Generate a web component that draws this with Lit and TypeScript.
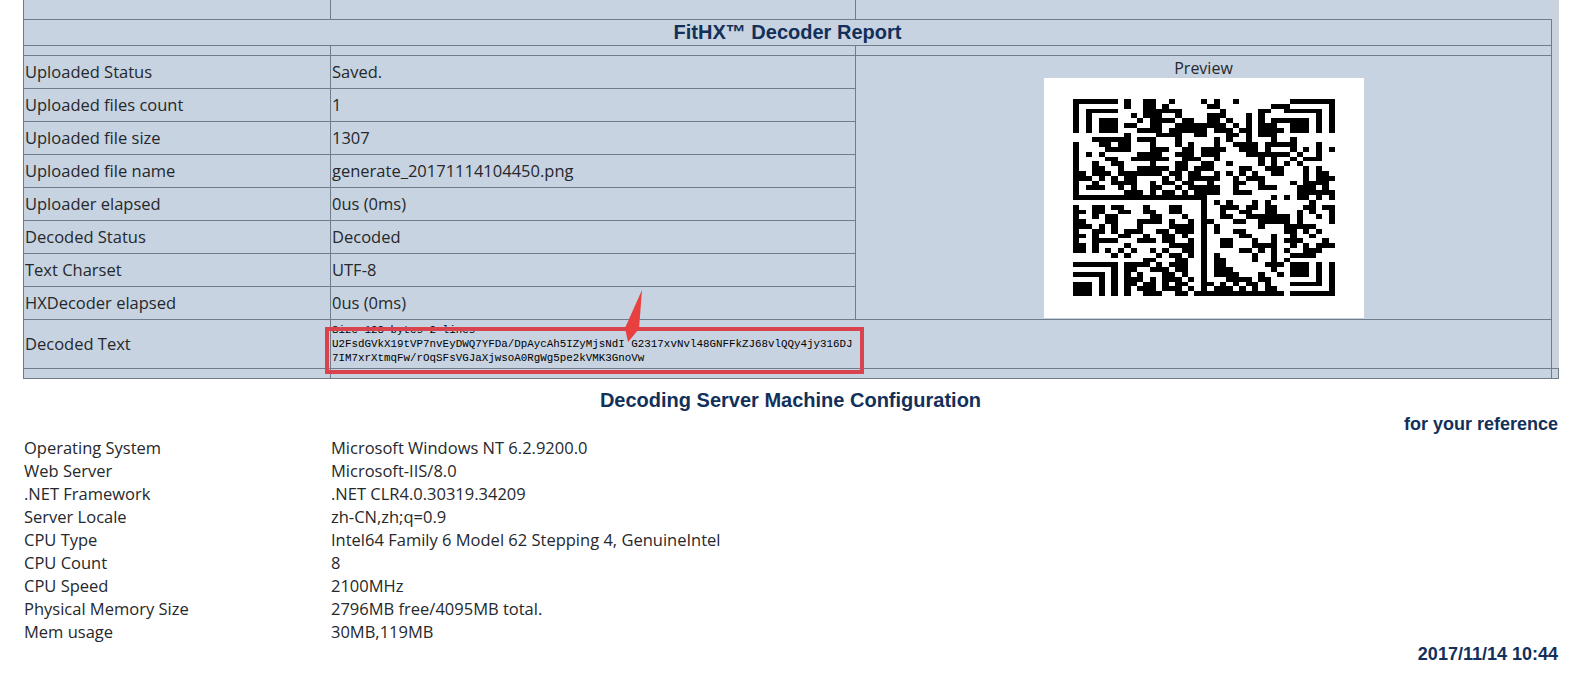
import { LitElement, html, css, svg } from "lit";
import { customElement } from "lit/decorators.js";

const QR: [string, string][] = [
  ["#######.#..##..#....#", ".#..#..............."],
  ["........#..##.#......", "##........###......."],
  ["...........######....", "..#.....##..#.#....."],
  [".........#.###..#....", "###...#.#....#......"],
  ["..........#.####.##..", "##.#..#.#.###......."],
  ["........##..##..#####", "###.#.#.###........."],
  ["..........####.######", ".###.##.####........"],
  ["........#....####..##", "...##.#.###........."],
  ["...######.###...#....", ".#.#..#...#..#......"],
  ["#...##.##...#...#.#..", ".#..####.#####...#.."],
  ["#....####...###..##.#", "###..###.#...#.#.#.#"],
  ["#.#.#.....####..###.#", "##....#######.#..#.."],
  ["#....##..######..###.", ".#......#.#..#.###.."],
  ["#..#..##....#...##..#", "#..#....#.#.#.#....."],
  ["#..##..#..#####.##.##", "#....##..###...#.#.."],
  ["##.###.#######.##.##.", ".#.#.#.#..##...#.##."],
  ["###.#.#.##....#.#.###", "##..#.###......#.###"],
  ["#..#..####..#.##.##..", "#...##..#....#.####."],
  ["#.###..#.#..##..#.###", "##..#...###...###.#."],
  ["#.......###.#.##.#.##", "##..###.......######"],
  ["#####################", "..........#.#.##.#.#"],
  ["....................#", ".#.#...#.#......#..."],
  ["#..##.##...#...##...#", "..###.##.##....##.##"],
  ["##.##..##..##..##...#", "..#..##..##...#.#..#"],
  ["#..#.##.....##...#..#", "..##..#######.#..#.#"],
  ["##...##...####.#..#.#", "#...##..#####.#....#"],
  ["###.#.#...#....####.#", ".#......#...#####..."],
  ["#..##.#.###..##.###.#", ".#..##......##.#.#.."],
  ["##.#...##..#..##.#..#", ".....##...#..#..#..."],
  ["#..####...###.##..#.#", "..##...#..#.###...#."],
  ["##.#....#......####.#", "..##...####..#.#.###"],
  ["##.#.#.#.#..#.#..##.#", ".....##.#.#.#..###.."],
  ["......#.#....#.##.#.#", ".#.....#..#..####..."],
  ["...........##...##..#", ".##....#..#.#......."],
  ["#######.####.#.###..#", ".##......###........"],
  ["......#.##..###.##..#", ".###......#........."],
  ["#####.#.#.#...##.#..#", ".####...#..#........"],
  ["....#.#.###.#.###.#.#", "...####.##.........."],
  ["###.#.#.##.##.#.##..#", "#.#.#.##.#.........."],
  ["###.#.#.#.###.###.#.#", ".###.#.#.##........."],
  ["###.#.#.#..###..##.##", "############........"],
];

function moduleGrid(): boolean[][] {
  const g = QR.map(([l, r]) => (l + r).split("").map((c) => c === "#"));
  const tl = [
    "#######",
    "#......",
    "#.#####",
    "#.#....",
    "#.#.###",
    "#.#.###",
    "#.#.###",
  ];
  for (let y = 0; y < 7; y++) {
    for (let x = 0; x < 7; x++) {
      const on = tl[y][x] === "#";
      g[y][x] = on;
      g[y][40 - x] = on;
      g[34 + y][6 - x] = on;
      g[40 - y][40 - x] = on;
    }
  }
  return g;
}

function qrPath(): string {
  let d = "";
  moduleGrid().forEach((row, y) =>
    row.forEach((on, x) => {
      if (on) d += `M${x} ${y}h1v1h-1z`;
    })
  );
  return d;
}

const STATUS: [string, string][] = [
  ["Uploaded Status", "Saved."],
  ["Uploaded files count", "1"],
  ["Uploaded file size", "1307"],
  ["Uploaded file name", "generate_20171114104450.png"],
  ["Uploader elapsed", "0us (0ms)"],
  ["Decoded Status", "Decoded"],
  ["Text Charset", "UTF-8"],
  ["HXDecoder elapsed", "0us (0ms)"],
];

const SERVER: [string, string][] = [
  ["Operating System", "Microsoft Windows NT 6.2.9200.0"],
  ["Web Server", "Microsoft-IIS/8.0"],
  [".NET Framework", ".NET CLR4.0.30319.34209"],
  ["Server Locale", "zh-CN,zh;q=0.9"],
  ["CPU Type", "Intel64 Family 6 Model 62 Stepping 4, GenuineIntel"],
  ["CPU Count", "8"],
  ["CPU Speed", "2100MHz"],
  ["Physical Memory Size", "2796MB free/4095MB total."],
  ["Mem usage", "30MB,119MB"],
];

@customElement("app-root")
export class AppRoot extends LitElement {
  static styles = css`
    :host {
      display: block;
      width: 1589px;
      height: 692px;
      overflow: hidden;
      background: #fff;
      color: #25282c;
      font-family: "Open Sans", "Noto Sans", sans-serif;
      font-size: 16.5px;
    }
    .page {
      width: 1535px;
      margin-left: 23px;
    }
    .report {
      position: relative;
      background: #c9d2dd;
    }
    table {
      width: 1535px;
      table-layout: fixed;
      border-collapse: collapse;
    }
    td {
      padding: 0 1px;
      border: 1px solid #6f7c8b;
      background: #c7d3e0;
      white-space: nowrap;
      box-sizing: border-box;
    }
    .c1 { width: 307px; }
    .c2 { width: 525px; }
    .c3 { width: 696px; }
    .c4 { width: 7px; }
    td.edge {
      border: none;
      background: #c9d2dd;
    }
    tr.top td { height: 19px; border-top: none; }
    tr.top td.open { border-right: none; }
    tr.title td {
      height: 26px;
      padding: 0;
      text-align: center;
      font: bold 20px "Liberation Sans", Arial, sans-serif;
      color: #12305a;
    }
    tr.spacer td { height: 10px; }
    tr.data td { height: 33px; }
    td.preview {
      padding: 0;
      text-align: center;
      vertical-align: top;
      font-size: 16px;
    }
    .preview-label {
      display: block;
      height: 22px;
      line-height: 25px;
    }
    .shot {
      display: block;
      width: 320px;
      height: 240px;
      margin: 0 auto;
      padding: 21px 29px 22px;
      box-sizing: border-box;
      background: #fff;
    }
    .shot svg {
      display: block;
      width: 262px;
      height: 197px;
      shape-rendering: crispEdges;
    }
    tr.decoded td { height: 48px; vertical-align: top; }
    .decoded-label { line-height: 48px; }
    .dump {
      margin: 3px 0 0;
      font: 10.85px/14.4px "Liberation Mono", monospace;
      color: #000;
    }
    tr.tail td { height: 10px; }
    td.edge.closed { border: 1px solid #6f7c8b; border-left: none; }
    .mark {
      position: absolute;
      left: 302px;
      top: 327px;
      width: 539px;
      height: 47px;
      box-sizing: border-box;
      border: 4px solid #d9434e;
      pointer-events: none;
    }
    .arrow {
      position: absolute;
      left: 600px;
      top: 288px;
      width: 24px;
      height: 56px;
      pointer-events: none;
    }
    h2 {
      margin: 0;
      padding: 10px 0 0;
      text-align: center;
      font: bold 20px/23px "Liberation Sans", Arial, sans-serif;
      color: #12305a;
    }
    .note {
      padding-top: 1px;
      text-align: right;
      font: bold 18px/22px "Liberation Sans", Arial, sans-serif;
      color: #12305a;
    }
    .server {
      display: grid;
      grid-template-columns: 307px 1fr;
      grid-auto-rows: 23px;
      align-items: center;
      margin-top: 1px;
      padding-left: 1px;
      line-height: 23px;
    }
    .stamp {
      padding-top: 1px;
      text-align: right;
      font: bold 18px/20px "Liberation Sans", Arial, sans-serif;
      color: #12305a;
    }
  `;

  render() {
    return html`
      <div class="page">
        <div class="report">
          <table>
            <colgroup>
              <col class="c1" /><col class="c2" /><col class="c3" /><col class="c4" />
            </colgroup>
            <tr class="top">
              <td></td><td></td><td class="open"></td><td class="edge"></td>
            </tr>
            <tr class="title">
              <td colspan="3">FitHX™ Decoder Report</td><td class="edge"></td>
            </tr>
            <tr class="spacer">
              <td></td><td></td><td></td><td class="edge"></td>
            </tr>
            ${STATUS.map(
              ([k, v], i) => html`
                <tr class="data">
                  <td>${k}</td>
                  <td>${v}</td>
                  ${i === 0
                    ? html`<td class="preview" rowspan="8">
                          <span class="preview-label">Preview</span>
                          <span class="shot">
                            <svg viewBox="0 0 41 41" preserveAspectRatio="none">
                              ${svg`<path d=${qrPath()} fill="#000"></path>`}
                            </svg>
                          </span>
                        </td>
                        <td class="edge" rowspan="8"></td>`
                    : ""}
                </tr>
              `
            )}
            <tr class="decoded">
              <td><div class="decoded-label">Decoded Text</div></td>
              <td colspan="2">
                <div class="dump">Size  128 bytes 2 lines<br />U2FsdGVkX19tVP7nvEyDWQ7YFDa/DpAycAh5IZyMjsNdI G2317xvNvl48GNFFkZJ68vlQQy4jy316DJ<br />7IM7xrXtmqFw/rOqSFsVGJaXjwsoA0RgWg5pe2kVMK3GnoVw</div>
              </td>
              <td class="edge"></td>
            </tr>
            <tr class="tail">
              <td></td><td colspan="2"></td><td class="edge closed"></td>
            </tr>
          </table>
          <div class="mark"></div>
          <svg class="arrow" viewBox="0 0 24 56">
            <polygon points="19,2 2,40 5,54 16,41" fill="#e8403f"></polygon>
          </svg>
        </div>
        <h2>Decoding Server Machine Configuration</h2>
        <div class="note">for your reference</div>
        <div class="server">
          ${SERVER.map(([k, v]) => html`<div>${k}</div><div>${v}</div>`)}
        </div>
        <div class="stamp">2017/11/14 10:44</div>
      </div>
    `;
  }
}
